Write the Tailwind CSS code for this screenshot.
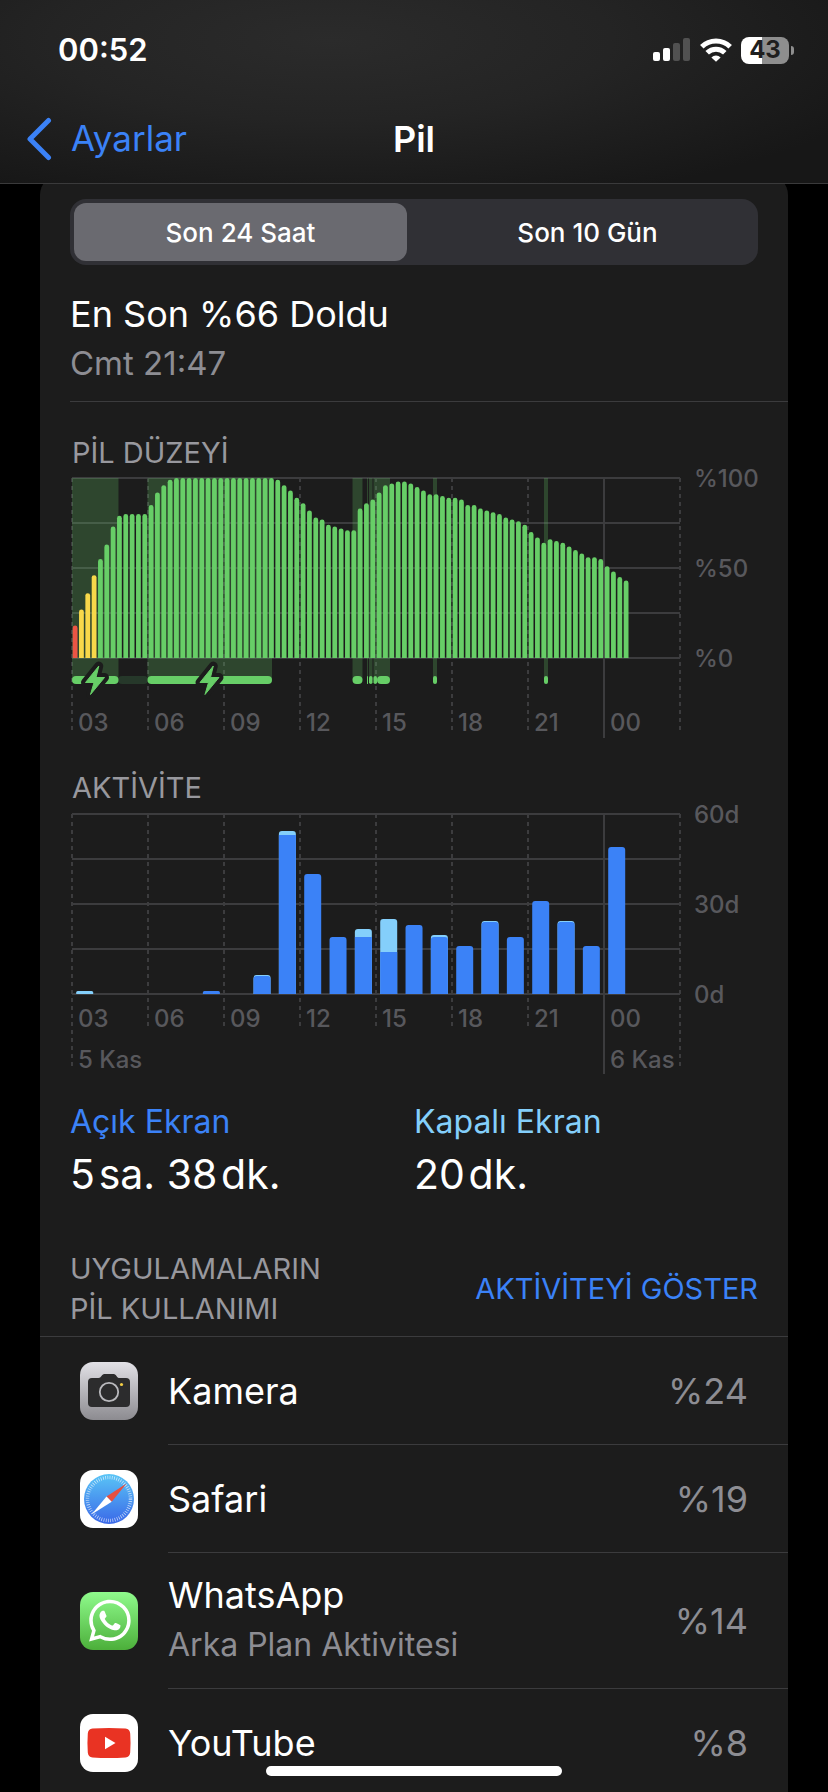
<!DOCTYPE html>
<html lang="tr">
<head>
<meta charset="utf-8">
<meta name="viewport" content="width=device-width, initial-scale=1">
<title>Pil</title>
<script src="https://cdn.jsdelivr.net/npm/@tailwindcss/browser@4"></script>
</head>
<body class="min-h-screen bg-black font-['Inter','Noto_Sans',sans-serif] text-white">

<header class="relative z-10 border-b border-[#3a3a3b] bg-[#171717] bg-[radial-gradient(ellipse_at_40%_22%,#2b2b2b_0%,#242424_40%,#171717_85%)]">
  <div class="flex h-24 items-center justify-between pt-1 pr-[34px] pl-[58px]">
    <time class="text-[31px] font-semibold">00:52</time>
    <div class="flex items-center gap-[9px]">
      <svg class="h-6 w-[38px]" viewBox="0 0 38 24" aria-label="Sinyal">
        <rect x="0" y="14" width="7" height="9" rx="2" fill="#fff"/>
        <rect x="10" y="10" width="7" height="13" rx="2" fill="#fff"/>
        <rect x="20" y="5" width="7" height="18" rx="2" fill="#515151"/>
        <rect x="30" y="0" width="7" height="23" rx="2" fill="#515151"/>
      </svg>
      <svg class="h-6 w-8" viewBox="0 0 32 24" aria-label="Wi-Fi" fill="none" stroke="#fff" stroke-width="5">
        <path d="M1.800 8.800a20.300 20.300 0 0 1 28.400 0"/>
        <path d="M7.200 14.800a12.600 12.600 0 0 1 17.600 0"/>
        <path d="M16 23.800l-4.600-4.400a6.600 6.600 0 0 1 9.200 0z" fill="#fff" stroke="none"/>
      </svg>
      <div class="flex items-center gap-[2px]">
        <div class="flex h-[27px] w-12 items-center justify-center rounded-lg bg-linear-to-r from-white from-44% to-[#8e8e8e] to-44% text-[24px] leading-none font-bold text-[#1e1e1e]">43</div>
        <div class="h-[9px] w-[3px] rounded-r-full bg-[#8e8e8e]"></div>
      </div>
    </div>
  </div>
  <nav class="grid h-[87px] grid-cols-3 items-center pb-[2px]">
    <a href="#" class="flex items-center gap-[19px] pl-[26px] text-[35px] text-[#3b82f7]">
      <svg class="h-11 w-[26px]" viewBox="0 0 26 44" fill="none" stroke="currentColor" stroke-width="5" stroke-linecap="round" stroke-linejoin="round"><path d="M22.500 3.500L4 22l18.500 18.500"/></svg>
      Ayarlar
    </a>
    <h1 class="text-center text-[36px] font-semibold">Pil</h1>
  </nav>
</header>

<main class="-mt-[9px] px-10">
  <div class="rounded-t-[20px] bg-[#1c1c1c] pt-6">

    <section class="pl-[30px]">
      <div class="mr-[30px] grid h-[66px] grid-cols-2 gap-[14px] rounded-2xl bg-[#303035] p-1 text-[26px] font-medium" role="tablist">
        <button type="button" role="tab" aria-selected="true" class="rounded-xl bg-[#6a6a70]">Son 24 Saat</button>
        <button type="button" role="tab" aria-selected="false" class="rounded-xl">Son 10 Gün</button>
      </div>
      <div class="mt-[25px] border-b border-[#3b3b3d] pb-[15px]">
        <p class="text-[36px] leading-[48px]">En Son %66 Doldu</p>
        <p class="mt-[2px] text-[33px] leading-[46px] text-[#8d8d93]">Cmt 21:47</p>
      </div>
    </section>

    <section class="px-[30px]">
      <h2 class="mt-[33px] pl-[2px] text-[29px] leading-[36px] text-[#98989e]">PİL DÜZEYİ</h2>
      <svg id="level" class="block w-full overflow-visible" viewBox="-2 -7 688 299" role="img" aria-label="Pil düzeyi"></svg>
      <h2 class="pl-[2px] text-[29px] leading-[36px] text-[#98989e]">AKTİVİTE</h2>
      <svg id="activity" class="block w-full overflow-visible" viewBox="-2 -8 688 296" role="img" aria-label="Aktivite"></svg>

      <dl class="grid grid-cols-2">
        <div>
          <dt class="text-[32px] leading-10 text-[#3b82f7]">Açık Ekran</dt>
          <dd class="mt-1 text-[41px] leading-[56px]">5&#8202;sa. 38&#8202;dk.</dd>
        </div>
        <div>
          <dt class="text-[32px] leading-10 text-[#84cffb]">Kapalı Ekran</dt>
          <dd class="mt-1 text-[41px] leading-[56px]">20&#8202;dk.</dd>
        </div>
      </dl>
    </section>

    <section class="mt-[47px]">
      <div class="flex items-center justify-between border-b border-[#3b3b3d] px-[30px] pb-[7px] text-[29px] leading-10">
        <h2 class="text-[#98989e]">UYGULAMALARIN<br>PİL KULLANIMI</h2>
        <button type="button" class="text-[#3b82f7]">AKTİVİTEYİ GÖSTER</button>
      </div>
      <ul class="text-[36px]">
        <li class="flex pl-10">
          <svg class="mr-[30px] size-[58px] self-center" viewBox="0 0 58 58">
            <defs><linearGradient id="cam" x2="0" y2="1"><stop stop-color="#e2e1e6"/><stop offset="1" stop-color="#8c8b90"/></linearGradient></defs>
            <rect width="58" height="58" rx="13" fill="url(#cam)"/>
            <path d="M12 16h6.500c1.500 0 2-.7 3-2 1-1.400 2-2 3.500-2h8c1.500 0 2.500.6 3.500 2s1.500 2 3 2H46a4 4 0 0 1 4 4v21a4 4 0 0 1-4 4H12a4 4 0 0 1-4-4V20a4 4 0 0 1 4-4z" fill="#2c2c2d"/>
            <circle cx="29" cy="30" r="9.200" fill="none" stroke="#b9b9bd" stroke-width="1.800"/>
            <circle cx="41.500" cy="22.500" r="1.600" fill="#f4cf45"/>
          </svg>
          <div class="flex h-[108px] flex-1 items-center justify-between border-b border-[#3b3b3d] pr-10"><span>Kamera</span><span class="text-[#8d8d93]">%24</span></div>
        </li>
        <li class="flex pl-10">
          <svg class="mr-[30px] size-[58px] self-center" viewBox="0 0 58 58">
            <defs><linearGradient id="saf" x2="0" y2="1"><stop stop-color="#5ac5f6"/><stop offset="1" stop-color="#3a68e8"/></linearGradient></defs>
            <rect width="58" height="58" rx="13" fill="#fff"/>
            <circle cx="29" cy="29" r="25" fill="url(#saf)"/>
            <circle cx="29" cy="29" r="21.500" fill="none" stroke="#fff" stroke-opacity=".7" stroke-width="3.500" stroke-dasharray="0.750 1.502"/>
            <path d="M46.500 13.500L31.700 31.700l-5.200-5.200z" fill="#e8503f"/>
            <path d="M11.500 44.500l15-18 5.200 5.200z" fill="#fff"/>
          </svg>
          <div class="flex h-[108px] flex-1 items-center justify-between border-b border-[#3b3b3d] pr-10"><span>Safari</span><span class="text-[#8d8d93]">%19</span></div>
        </li>
        <li class="flex pl-10">
          <svg class="mr-[30px] size-[58px] self-center" viewBox="0 0 58 58">
            <defs><linearGradient id="wa" x2="0" y2="1"><stop stop-color="#8ffb8c"/><stop offset="1" stop-color="#4caf3a"/></linearGradient></defs>
            <rect width="58" height="58" rx="13" fill="url(#wa)"/>
            <path transform="translate(9 7.700) scale(1.740)" fill="#fff" d="M17.472 14.382c-.297-.149-1.758-.867-2.030-.967-.273-.099-.471-.148-.67.15-.197.297-.767.966-.94 1.164-.173.199-.347.223-.644.075-.297-.15-1.255-.463-2.390-1.475-.883-.788-1.480-1.761-1.653-2.059-.173-.297-.018-.458.13-.606.134-.133.298-.347.446-.52.149-.174.198-.298.298-.497.099-.198.05-.371-.025-.52-.075-.149-.669-1.612-.916-2.207-.242-.579-.487-.5-.669-.51-.173-.008-.371-.01-.57-.01-.198 0-.52.074-.792.372-.272.297-1.040 1.016-1.040 2.479 0 1.462 1.065 2.875 1.213 3.074.149.198 2.096 3.200 5.077 4.487.709.306 1.262.489 1.694.625.712.227 1.360.195 1.871.118.571-.085 1.758-.719 2.006-1.413.248-.694.248-1.289.173-1.413-.074-.124-.272-.198-.57-.347m-5.421 7.403h-.004a9.870 9.870 0 0 1-5.031-1.378l-.361-.214-3.741.982.998-3.648-.235-.374a9.860 9.860 0 0 1-1.510-5.260c.001-5.450 4.436-9.884 9.888-9.884 2.640 0 5.122 1.030 6.988 2.898a9.825 9.825 0 0 1 2.893 6.994c-.003 5.450-4.437 9.884-9.885 9.884m8.413-18.297A11.815 11.815 0 0 0 12.050 0C5.495 0 .16 5.335.157 11.892c0 2.096.547 4.142 1.588 5.945L.057 24l6.305-1.654a11.882 11.882 0 0 0 5.683 1.448h.005c6.554 0 11.890-5.335 11.893-11.893a11.821 11.821 0 0 0-3.480-8.413z"/>
          </svg>
          <div class="flex h-[136px] flex-1 items-center justify-between border-b border-[#3b3b3d] pr-10">
            <span><span class="block leading-[48px]">WhatsApp</span><span class="block text-[32px] leading-[52px] text-[#8d8d93]">Arka Plan Aktivitesi</span></span>
            <span class="text-[#8d8d93]">%14</span>
          </div>
        </li>
        <li class="flex pt-[25px] pb-5 pl-10">
          <svg class="mr-[30px] size-[58px]" viewBox="0 0 58 58">
            <rect width="58" height="58" rx="13" fill="#fff"/>
            <path d="M12.500 14.600Q29 13.400 45.500 14.600c3 .2 4.400 1.900 4.700 4.900q.7 9.500 0 19c-.3 3-1.700 4.700-4.700 5q-16.500 1-33 0c-3-.3-4.400-2-4.700-5q-.7-9.500 0-19c.3-3 1.700-4.700 4.700-4.900z" fill="#e93323"/>
            <path d="M25 22.800v12.400L35.500 29z" fill="#fff"/>
          </svg>
          <div class="flex flex-1 items-center justify-between pr-10"><span>YouTube</span><span class="text-[#8d8d93]">%8</span></div>
        </li>
      </ul>
    </section>
  </div>
</main>

<div class="fixed bottom-4 left-1/2 h-[10px] w-[296px] -translate-x-1/2 rounded-full bg-white"></div>

<script>
const NS = 'http://www.w3.org/2000/svg';
const add = (parent, tag, attrs, text) => {
  const el = document.createElementNS(NS, tag);
  for (const k in attrs) el.setAttribute(k, attrs[k]);
  if (text) el.textContent = text;
  parent.appendChild(el);
  return el;
};
const W = 608, H = 180, COL = 76, GRID = '#3c3c3e', GREEN = '#67ce67';
const hours = ['03', '06', '09', '12', '15', '18', '21', '00'];

const grid = (svg, ends, yLabels, hourY) => {
  for (let i = 0; i <= 4; i++) add(svg, 'line', { x1: 0, x2: W, y1: i * 45, y2: i * 45, stroke: GRID, 'stroke-width': 2 });
  ends.forEach((end, i) => {
    const a = { x1: i * COL, x2: i * COL, y1: 0, y2: end, stroke: GRID, 'stroke-width': 2 };
    if (i !== 7) a['stroke-dasharray'] = '4 4';
    add(svg, 'line', a);
  });
  const t = { 'font-size': 24, 'font-weight': 500, fill: '#58585c' };
  yLabels.forEach((s, i) => add(svg, 'text', { ...t, x: 622, y: 9 + i * 90 }, s));
  hours.forEach((s, i) => add(svg, 'text', { ...t, x: i * COL + 6, y: hourY }, s));
  return t;
};

// Battery level, one bar per quarter hour
const level = document.getElementById('level');
grid(level, [256, 256, 256, 256, 256, 256, 256, 260, 256], ['%100', '%50', '%0'], 253);
const charge = [[0, 46.500], [75.500, 200], [280.500, 290.500], [295, 296], [297, 300.500], [301.500, 305], [305, 318], [361, 365], [472, 476]];
for (const [a, b] of charge) add(level, 'rect', { x: a, y: 0, width: b - a, height: 202, fill: GREEN, 'fill-opacity': .24 });
add(level, 'rect', { x: 46, y: 198, width: 30, height: 8, rx: 4, fill: '#26382a' });
for (const [a, b] of charge) add(level, 'rect', { x: a, y: 198, width: b - a, height: 8, rx: Math.min(4, (b - a) / 2), fill: GREEN });
const values = [18,27,36,46,55,63,73,79,80,80,80,80,85,92,96,99,
  ...Array(16).fill(100),
  99,96,93,89,86,82,78,77,74,73,72,71,71,83,86,88,92,96,97,98,98,97,95,93,91,91,90,89,89,88,85,85,83,82,81,80,78,77,76,74,
  70,67,64,66,65,64,62,60,58,56,56,55,51,48,45,43];
// The first hour was spent in low power mode, which is drawn in yellow
values.forEach((v, i) => {
  const x = i * COL / 12 + 0.700, y = H - v * 1.800;
  add(level, 'path', { d: `M${x} ${H}V${y + 2.400}a2.400 2.400 0 0 1 4.800 0V${H}z`, fill: v <= 20 ? '#eb5545' : i < 4 ? '#f8d84a' : GREEN });
});
for (const x of [23, 137.500]) {
  const d = `M${x + 3.800} 188L${x - 9.500} 204.500H${x - 1}L${x - 4.500} 216.500L${x + 9.500} 199.500H${x + 1}z`;
  add(level, 'path', { d, fill: '#1c1c1c', stroke: '#1c1c1c', 'stroke-width': 9, 'stroke-linejoin': 'round' });
  add(level, 'path', { d, fill: GREEN, stroke: GREEN, 'stroke-width': 1, 'stroke-linejoin': 'round' });
}

// Screen activity, one stacked bar per hour: [total, screen on]
const activity = document.getElementById('activity');
const t = grid(activity, [256, 216, 216, 216, 216, 216, 216, 260, 256], ['60d', '30d', '0d'], 213);
add(activity, 'text', { ...t, x: 6, y: 254 }, '5 Kas');
add(activity, 'text', { ...t, x: 538, y: 254 }, '6 Kas');
const use = { 0: [3, 0], 5: [3, 3], 7: [19, 18], 8: [163, 159], 9: [120, 120], 10: [57, 57], 11: [65, 57], 12: [75, 42], 13: [69, 69], 14: [59, 57],
  15: [48, 48], 16: [73, 72], 17: [57, 57], 18: [93, 93], 19: [73, 72], 20: [48, 48], 21: [147, 147] };
for (const h in use) {
  const [total, on] = use[h], x = h * COL / 3 + 4.200, r = Math.min(3, total / 2), w = 17;
  const shape = top => `M${x} ${H}V${H - top + r}q0 ${-r} ${r} ${-r}h${w - 2 * r}q${r} 0 ${r} ${r}V${H}z`;
  add(activity, 'path', { d: shape(total), fill: on === total ? '#3b82f7' : '#84cffb' });
  if (on && on < total) {
    if (total - on < 3) add(activity, 'path', { d: shape(on), fill: '#3b82f7' });
    else add(activity, 'rect', { x, y: H - on, width: w, height: on, fill: '#3b82f7' });
  }
}
</script>
</body>
</html>
